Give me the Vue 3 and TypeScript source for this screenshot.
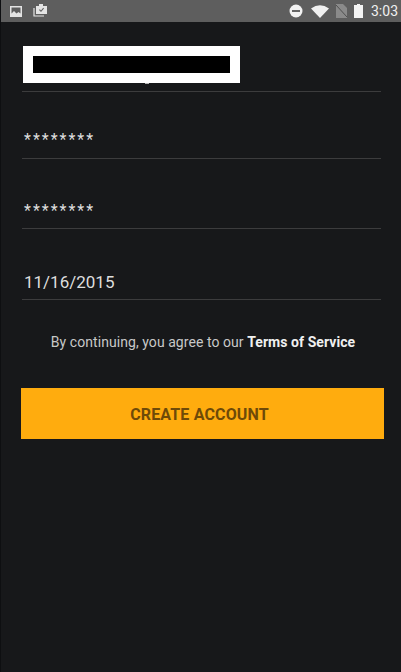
<script setup lang="ts">
const fields: { value: string; kind: string }[] = [
  { value: "********", kind: "pw first" },
  { value: "********", kind: "pw" },
  { value: "11/16/2015", kind: "date" },
];
</script>

<template>
  <div class="screen">
    <header class="status">
      <div class="left">
        <svg width="13" height="13" viewBox="0 0 13 13"><path fill="#e4e4e4" fill-rule="evenodd" d="M0 1h12v11H0zM1.5 2.500v6l2.500-2.500 2.500 2.500 2-1.500 2 1.500v-6z"/></svg>
        <svg width="16" height="16" viewBox="0 0 16 16"><path fill="none" stroke="#e4e4e4" stroke-width="1.200" d="M1 6v8h10"/><path fill="#e4e4e4" fill-rule="evenodd" d="M3 4h3V2h4v2h4v8H3zM6 8l2 2 3-3.500-.8-.7L8 8.400 6.800 7.200z"/></svg>
      </div>
      <div class="right">
        <svg class="dnd" width="14" height="14" viewBox="0 0 14 14"><circle cx="7" cy="7" r="6.500" fill="#f2f2f2"/><rect x="3" y="6" width="8" height="2" fill="#666"/></svg>
        <svg class="wifi" width="18" height="13" viewBox="0 0 18 13"><path fill="#f0f0f0" d="M0 3.500Q9-3 18 3.500L9 13z"/></svg>
        <svg class="sim" width="11" height="14" viewBox="0 0 11 14"><path fill="#8a8a8a" d="M0 0h7l4 4v10H0z"/><path stroke="#505050" stroke-width="1" d="M0 1l11 12"/></svg>
        <svg class="bat" width="9" height="14" viewBox="0 0 9 14"><path fill="#f4f4f4" d="M0 1h9v13H0z"/><path fill="#f4f4f4" d="M3 0h3v1H3z"/></svg>
        <span class="time">3:03</span>
      </div>
    </header>

    <main class="form">
      <div class="field top">
        <div class="redact"><div class="bar"></div></div>
      </div>
      <div v-for="(f, i) in fields" :key="i" class="field" :class="f.kind">
        <span>{{ f.value }}</span>
      </div>
      <p class="terms">By continuing, you agree to our <b>Terms of Service</b></p>
      <button class="cta">CREATE ACCOUNT</button>
    </main>
  </div>
</template>

<style>
html, body { margin: 0; background: #17181a; }
</style>

<style scoped>
.screen {
  width: 401px;
  height: 672px;
  background: #17181a;
  overflow: hidden;
  font-family: Roboto, "Liberation Sans", sans-serif;
  color: #e6e6e6;
  border-left: 1px solid #0e0f11;
  box-sizing: border-box;
}
.status {
  height: 22px;
  background: #5e5e5e;
  display: flex;
  justify-content: space-between;
  align-items: center;
  padding: 0 2px 0 9px;
}
.left { display: flex; gap: 10px; align-items: center; }
.left svg + svg { margin-top: -2px; }
.right { display: flex; align-items: center; gap: 7px; }
.dnd { margin-right: 1px; }
.time { font-size: 14px; color: #f0f0f0; margin-left: 1px; width: 28px; }
.form { padding: 0 20px 0 21px; }
.field {
  display: flex;
  align-items: flex-end;
  border-bottom: 1px solid #3c3c3d;
  box-sizing: border-box;
}
.top { height: 70px; padding: 24px 0 7px 1px; align-items: flex-start; }
.redact {
  position: relative;
  width: 217px;
  height: 37px;
  background: #fff;
  padding: 10px;
  box-sizing: border-box;
}
.redact::after {
  content: "";
  position: absolute;
  left: 122px;
  top: 37px;
  width: 4px;
  height: 1px;
  background: #b5b5b5;
}
.bar { height: 17px; background: #000; }
.pw { height: 70px; padding: 0 0 8px 2px; font-size: 16px; letter-spacing: 2px; color: #dedede; }
.first { height: 67px; padding-bottom: 9px; }
.pw span { line-height: 18px; }
.date { height: 71px; padding: 0 0 7px 2px; font-size: 17px; letter-spacing: 0; color: #dedede; }
.terms {
  margin: 33px 0 0;
  text-align: center;
  font-size: 14px;
  line-height: 18px;
  letter-spacing: 0.060px;
  color: #c8c8c8;
  padding-left: 3px;
}
.terms b { color: #f0f0f0; font-weight: 700; }
.cta {
  display: block;
  width: 363px;
  height: 51px;
  margin: 37px 0 0 -1px;
  border: 0;
  background: #ffac0e;
  color: #6e4a08;
  font-family: inherit;
  font-size: 16px;
  font-weight: 700;
  letter-spacing: 0.150px;
  padding: 2px 6px 0 0;
}
</style>
